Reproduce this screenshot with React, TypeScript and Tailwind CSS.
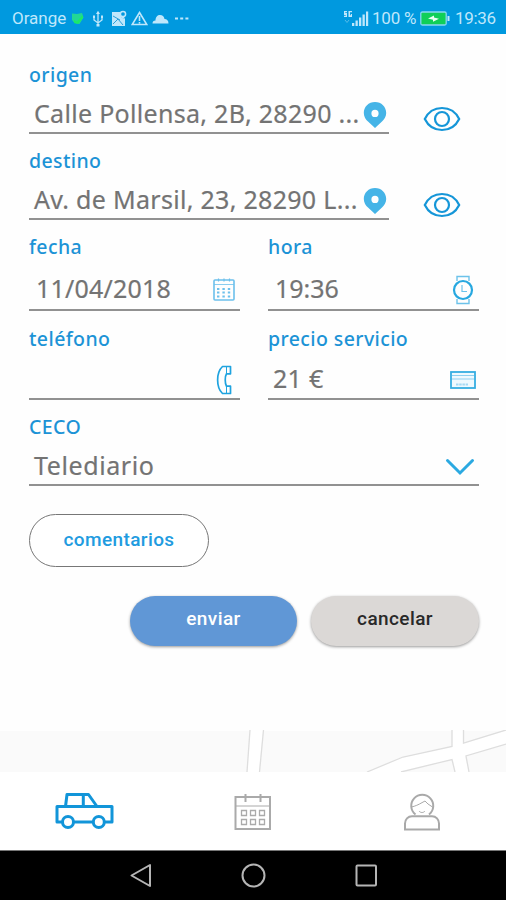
import React from 'react';

type FieldProps = {
  label: string;
  value?: string;
  className?: string;
  valueClass?: string;
  rowClass: string;
  icon: React.ReactNode;
};

const PinIcon = () => (
  <svg width="24" height="28" viewBox="0 0 24 28">
    <path
      fillRule="evenodd"
      fill="#45b4e7"
      d="M12 1C5.6 1 .8 5.9.8 12c0 3.6 2 6.600 4.200 8.500L12 27 19 20.500c2.300-2 4.200-4.900 4.200-8.500C23.200 5.900 18.400 1 12 1Zm0 7.800a3.600 3.600 0 1 1 0 7.200A3.600 3.600 0 0 1 12 8.800Z"
    />
  </svg>
);

const EyeIcon = () => (
  <svg width="38" height="26" viewBox="0 0 38 26" fill="none" stroke="#1596d8" strokeWidth="2.2">
    <path d="M1.800 13C5 6.500 11 2 19 2s14 4.500 17.200 11C33 19.500 27 24 19 24S5 19.500 1.800 13Z" />
    <circle cx="19" cy="13" r="7" />
  </svg>
);

const SmallCalendarIcon = () => (
  <svg width="22" height="23" viewBox="0 0 22 23" fill="none" stroke="#6cc0ec">
    <rect x="1" y="2" width="20" height="20" rx="1" strokeWidth="1.600" />
    <path d="M1 6.500h20" strokeWidth=".8" />
    <path d="M5.500.5v3M16.500.5v3M11 .5v3" strokeWidth="1.200" />
    <path d="M4 11h3.200M9.400 11h3.200M14.800 11h3.200M4 14.500h3.200M9.400 14.500h3.200M14.800 14.500h3.200M4 18.500h3.200M9.400 18.500h3.200M14.800 18.500h3.200" strokeWidth="1.800" strokeDasharray="2.400 .8" />
  </svg>
);

const WatchIcon = () => (
  <svg width="22" height="30" viewBox="0 0 22 30" fill="none" stroke="#27a8e0">
    <path d="M5 6V1.500h12V6M5 24v4.500h12V24" strokeWidth="1.400" stroke="#6cc2ea" />
    <circle cx="11" cy="15" r="9" strokeWidth="2.200" />
    <path d="M10 10v6.500h5" strokeWidth="1.200" stroke="#6cc2ea" />
  </svg>
);

const PhoneIcon = () => (
  <svg width="17" height="30" viewBox="0 0 17 30" fill="none" stroke="#1fa3df" strokeWidth="1.700" strokeLinejoin="round">
    <path d="M6.500 1.500h8v7.300H10.500C8.800 11.500 8.800 18.500 10.500 21.200h4V28.500h-8C0 22.500 0 7.500 6.500 1.500Z" />
    <path d="M10.500 1.500v7M10.500 21.500v7" strokeWidth="1" />
  </svg>
);

const CardIcon = () => (
  <svg width="26" height="18" viewBox="0 0 26 18" fill="none" stroke="#36ade2">
    <rect x="1" y="1" width="24" height="16" strokeWidth="1.800" fill="#eff9fe" />
    <path d="M2 4.500h22M2 8h22" strokeWidth="1" stroke="#8fd0f0" />
    <path d="M6 13.500h12" strokeWidth="2" strokeDasharray="2.500 .7" stroke="#a5d9f3" />
  </svg>
);

const ChevronIcon = () => (
  <svg width="30" height="18" viewBox="0 0 30 18" fill="none" stroke="#2ba9e1" strokeWidth="3" strokeLinecap="round">
    <path d="m2.500 2.500 12.500 12.500L27.500 2.500" />
  </svg>
);

const Field: React.FC<FieldProps> = ({ label, value, className = '', valueClass = 'pl-[5px] tracking-[0.3px]', rowClass, icon }) => (
  <div className={className}>
    <div className="h-6 pt-px text-[19.5px] leading-6 font-medium tracking-[0.4px] text-[#1c93d6]">{label}</div>
    <div className={`flex justify-between border-b-2 border-[#919191] ${rowClass}`}>
      <span className={`h-[34px] overflow-hidden whitespace-nowrap text-[25px] leading-[34px] text-[#737373] [-webkit-text-stroke:0.2px_#737373] ${valueClass}`}>{value}</span>
      <span className="shrink-0">{icon}</span>
    </div>
  </div>
);

const StatusBar = () => (
  <header className="flex h-[34px] items-center justify-between bg-[#0099df] pr-[11px] pl-3 pt-[3px] font-['Roboto',sans-serif] text-[17px] text-[#bfe7fb]">
    <div className="flex items-center">
      <span className="w-[54px] whitespace-nowrap">Orange</span>
      <svg className="ml-[5px]" width="13" height="13" viewBox="0 0 13 13">
        <path d="M1 1.500 6 2l5-1 1.500 4.500-4 6.500-5-1L1 8Z" fill="#22d795" />
        <path d="m3 8 3 1.500L11.500 3 12 6l-5 6-4-1Z" fill="#1bea67" />
      </svg>
      <svg className="ml-[8px]" width="12" height="18" viewBox="0 0 12 18" fill="none" stroke="#bfe7fb" strokeWidth="1.300">
        <path d="M6 3v12M2 7v3l4 3 4-3V7" />
        <path d="M6 .8 8 4H4ZM4.500 14h3v2.500h-3ZM1 5.500h2V8H1ZM9 5.500h2V8H9Z" fill="#bfe7fb" stroke="none" />
      </svg>
      <svg className="ml-[7px]" width="16" height="17" viewBox="0 0 16 17">
        <path d="M1 2h8c0 4 2 6 3.500 7L14 8v8H1Z" fill="#bfe7fb" />
        <path d="m2 14 5-5 5 6M2 6l7 4" stroke="#2b9fd9" fill="none" />
        <circle cx="12" cy="4" r="2.600" fill="none" stroke="#bfe7fb" strokeWidth="1.500" />
        <path d="m10 6 2 4 2-4Z" fill="#bfe7fb" />
      </svg>
      <svg className="ml-[4px]" width="17" height="15" viewBox="0 0 17 15" fill="none" stroke="#bfe7fb" strokeWidth="1.600">
        <path d="M8.500 1.500 15.800 13.500H1.200ZM8.500 5v5M8.500 11v1.500" />
      </svg>
      <svg className="ml-[4px]" width="17" height="10" viewBox="0 0 17 10" fill="#bfe7fb">
        <path d="M.5 9.500C.5 7.500 1.500 6.500 3.500 6.500 3.500 3 5.500 1 8 1c2.500 0 4 1.500 4.500 4 2.500 0 4 1.500 4 4.500Z" />
      </svg>
      <svg className="ml-[6px]" width="14" height="4" viewBox="0 0 14 4" fill="#bfe7fb">
        <path d="M0 .5h3v2H0ZM5.200.5h3v2h-3ZM10.400.5h3v2h-3Z" />
      </svg>
    </div>
    <div className="flex items-center whitespace-nowrap">
      <svg width="26" height="18" viewBox="0 0 26 18" fill="#bfe7fb">
        <path d="M9 13h2.300v3H9ZM12.500 10.500h2.300V16h-2.300ZM16 7.500h2.300V16H16ZM19.500 4.500h2.300V16h-2.300ZM23 1.500h2.200V16H23Z" />
        <path d="M1 1h3v1.300H2.300V3H4v4H1V5.700h1.700V5H1ZM5.500 1H9v1.300H7v3h.8V4H9v3H5.500Z" />
        <path d="m2 10 2 2.500L6 10" fill="none" stroke="#55bce9" />
      </svg>
      <span className="ml-[3px] w-[44px] tracking-[-0.2px]">100 %</span>
      <svg className="ml-[4px]" width="30" height="15" viewBox="0 0 30 15">
        <rect x=".8" y="1" width="25.400" height="13" rx="1.500" fill="#10cf58" stroke="#86d7f2" strokeWidth="1.300" />
        <path d="M27.500 5h2v5h-2Z" fill="#bfe7fb" />
        <path d="m8 7.500 6-3v2l5 1.300-6 3v-2Z" fill="#e9fff2" />
      </svg>
      <span className="ml-[5px] w-[40px] tracking-[-0.3px]">19:36</span>
    </div>
  </header>
);

const MapStrip = () => (
  <svg className="block" width="506" height="42" viewBox="0 0 506 42" fill="none">
    <path fill="#fafafa" d="M0 1h506v41H0Z" />
    <path fill="#fff" d="M250 0h13l-4 42h-12ZM367 42l37-16 48-10V0h12v13l42-13v14l-41 13 4 15h-14l-2-12-52 12Z" />
    <g stroke="#dedede" strokeWidth="1.300">
      <path d="m250 0-3 42M263.500 0l-4 42M367 42l36-15 49-10.500V0M463.500 0v13L506 0M401 42l51-12.500 3 12.500M506 14l-40 12 3 16" />
    </g>
  </svg>
);

const TabBar = () => (
  <nav className="flex h-[78px] bg-white">
    <div className="flex w-[168px] items-start justify-center pt-5">
      <svg width="60" height="38" viewBox="0 0 60 38" fill="none" stroke="#1295d9" strokeWidth="3" strokeLinejoin="round">
        <path d="M8.500 30H3V14.500H58V30H50M19.500 30h19.500M11.500 14.500l1.500-12h21.500L43 14.500M29.300 3v11" />
        <circle cx="14" cy="30" r="5.500" />
        <circle cx="44.800" cy="30" r="5.500" />
      </svg>
    </div>
    <div className="flex w-[169px] items-start justify-center pt-[21px]">
      <svg width="40" height="38" viewBox="0 0 40 38" fill="none" stroke="#aaaaaa">
        <rect x="2.500" y="4" width="34.500" height="32" strokeWidth="2" />
        <path d="M3 13h34" strokeWidth="1" />
        <path d="M12.500 1v8M27.500 1v8" strokeWidth="2" />
        <path strokeWidth="1.300" d="M8.500 17.500h5v5h-5ZM17.500 17.500h5v5h-5ZM26.500 17.500h5v5h-5ZM8.500 26.500h5v5h-5ZM17.500 26.500h5v5h-5ZM26.500 26.500h5v5h-5Z" />
      </svg>
    </div>
    <div className="flex w-[169px] items-start justify-center pt-[21px]">
      <svg width="38" height="40" viewBox="0 0 38 40" fill="none" stroke="#a9a9a9" strokeWidth="2">
        <path d="M12.500 21.500a11 11 0 1 1 13.500 0" />
        <path d="M8.500 14c4-1 6-2 8-3l5.500-3 3 3 4.500 3M16 18c1.500 2 4.500 2 6 0" strokeWidth="1" />
        <path d="M2 36.500v-6c0-4 3-7.200 7-7.200h20c4 0 7 3.200 7 7.200v6Z" />
      </svg>
    </div>
  </nav>
);

const SystemNav = () => (
  <footer className="flex h-[50px] items-center justify-center border-t border-[#777] bg-black">
    <div className="flex w-[112px] justify-center">
      <svg width="24" height="26" viewBox="0 0 24 26" fill="none" stroke="#b5b5b5" strokeWidth="2" strokeLinejoin="round">
        <path d="M21 2v21L2.500 12.500Z" />
      </svg>
    </div>
    <div className="flex w-[113px] justify-center">
      <svg width="26" height="26" viewBox="0 0 26 26" fill="none" stroke="#b5b5b5" strokeWidth="2">
        <circle cx="13.500" cy="12.500" r="11" />
      </svg>
    </div>
    <div className="flex w-[112px] justify-center">
      <svg width="24" height="24" viewBox="0 0 24 24" fill="none" stroke="#b5b5b5" strokeWidth="2">
        <rect x="2.500" y="1.500" width="19.500" height="20" rx="1" />
      </svg>
    </div>
  </footer>
);

const App: React.FC = () => {
  return (
    <div className="flex h-[900px] w-[506px] flex-col overflow-hidden bg-[#fefefe] font-['Noto_Sans',sans-serif]">
      <StatusBar />

      <main className="h-[696px] pr-[27px] pl-[29px] pt-7">
        <div className="flex items-end">
          <Field className="w-[360px]" label="origen" value="Calle Pollensa, 2B, 28290 ..." rowClass="h-12 pt-[10px]" icon={<div className="mt-[5px] mr-[2px]"><PinIcon /></div>} />
          <div className="mb-[2px] ml-[34px]"><EyeIcon /></div>
        </div>
        <div className="mt-[14px] flex items-end">
          <Field className="w-[360px]" label="destino" value="Av. de Marsil, 23, 28290 L..." rowClass="h-12 pt-[10px]" icon={<div className="mt-[5px] mr-[2px]"><PinIcon /></div>} />
          <div className="mb-[2px] ml-[34px]"><EyeIcon /></div>
        </div>

        <div className="mt-[14px] grid grid-cols-2 gap-x-[28px]">
          <Field label="fecha" value="11/04/2018" valueClass="pl-[7px] tracking-[0.2px]" rowClass="h-[53px] pt-[13px]" icon={<div className="mt-[7px] mr-[5px]"><SmallCalendarIcon /></div>} />
          <Field label="hora" value="19:36" valueClass="pl-[7px]" rowClass="h-[53px] pt-[13px]" icon={<div className="mt-[4px] mr-[5px]"><WatchIcon /></div>} />
        </div>
        <div className="mt-[15px] grid grid-cols-2 gap-x-[28px]">
          <Field label="teléfono" rowClass="h-[50px] pt-[11px]" icon={<div className="mt-[4px] mr-[7px]"><PhoneIcon /></div>} />
          <Field label="precio servicio" value="21 €" rowClass="h-[50px] pt-[11px]" icon={<div className="mt-[10px] mr-[3px]"><CardIcon /></div>} />
        </div>
        <Field className="mt-[14px]" label="CECO" value="Telediario" valueClass="pl-[5px] tracking-[0.6px]" rowClass="h-12 pt-[10px]" icon={<div className="mt-[10px] mr-[4px]"><ChevronIcon /></div>} />

        <div className="mt-7 font-['Roboto',sans-serif] text-[19px] font-medium tracking-[0.4px]">
          <button className="flex h-[53px] w-[180px] items-center justify-center rounded-full border border-[#777] bg-white pb-px text-[#219be0]">comentarios</button>
          <div className="mt-[29px] flex justify-end gap-[14px]">
            <button className="h-[50px] w-[167px] rounded-full bg-[#6097d6] pb-[3px] text-white shadow-[0_1px_3px_rgba(0,0,0,0.4)]">enviar</button>
            <button className="h-[50px] w-[168px] rounded-full bg-[#dbd8d6] pb-[3px] text-[#292929] shadow-[0_1px_3px_rgba(0,0,0,0.4)]">cancelar</button>
          </div>
        </div>
      </main>

      <MapStrip />
      <TabBar />
      <SystemNav />
    </div>
  );
};

export default App;
